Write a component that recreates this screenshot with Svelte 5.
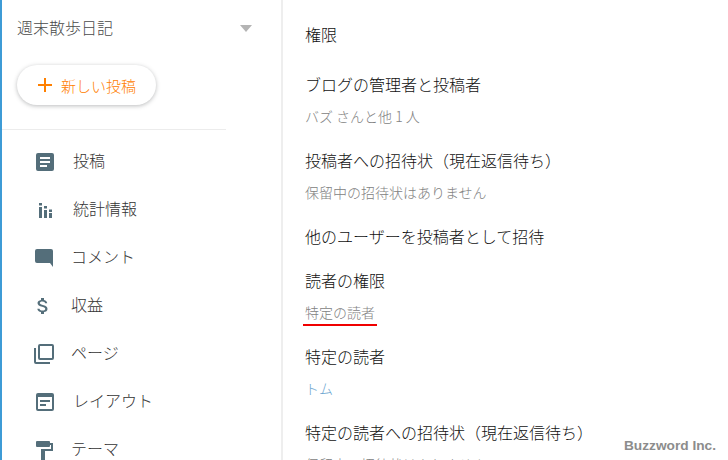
<script>
  const navItems = [
    { label: "投稿", icon: "posts", wide: true },
    { label: "統計情報", icon: "stats", wide: true },
    { label: "コメント", icon: "comments" },
    { label: "収益", icon: "earnings" },
    { label: "ページ", icon: "pages" },
    { label: "レイアウト", icon: "layout", wide: true },
    { label: "テーマ", icon: "theme" }
  ];
</script>

<div class="app">
  <aside class="sidebar">
    <div class="blog-select">
      <span>週末散歩日記</span>
      <i class="caret"></i>
    </div>
    <button class="new-post">
      <svg width="16" height="16" viewBox="0 0 16 16"><path d="M7 1h2v6h6v2H9v6H7V9H1V7h6z" fill="#ff8000" /></svg>
      <span>新しい投稿</span>
    </button>
    <hr />
    <nav>
      {#each navItems as item}
        <div class="nav-item" class:wide={item.wide}>
          <svg class="icon" width="24" height="24" viewBox="0 0 24 24">
            {#if item.icon === "posts"}
              <path d="M19 3H5a2 2 0 0 0-2 2v14a2 2 0 0 0 2 2h14a2 2 0 0 0 2-2V5a2 2 0 0 0-2-2zm-5 14H7v-2h7v2zm3-4H7v-2h10v2zm0-4H7V7h10v2z" />
            {:else if item.icon === "stats"}
              <path d="M6 9h3v11H6zM6 5h3v2.500H6zM11 12h3v8h-3zM11 8h3v2.500h-3zM16 15h3v5h-3zM16 11.500h3V14h-3z" />
            {:else if item.icon === "comments"}
              <path d="M21 5a2 2 0 0 0-2-2H5a2 2 0 0 0-2 2v10a2 2 0 0 0 2 2h13l3 4z" />
            {:else if item.icon === "earnings"}
              <path transform="translate(-1 1.300) scale(1 .89)" d="M11.800 10.900c-2.270-.59-3-1.200-3-2.150 0-1.090 1.010-1.850 2.700-1.850 1.780 0 2.440.85 2.500 2.100h2.210c-.07-1.720-1.120-3.300-3.210-3.810V3h-3v2.160c-1.940.42-3.500 1.680-3.500 3.610 0 2.310 1.910 3.460 4.700 4.130 2.500.6 3 1.480 3 2.410 0 .69-.49 1.790-2.700 1.790-2.060 0-2.870-.92-2.980-2.100h-2.200c.12 2.190 1.760 3.420 3.680 3.830V21h3v-2.150c1.950-.37 3.500-1.500 3.500-3.550 0-2.840-2.430-3.810-4.700-4.400z" />
            {:else if item.icon === "pages"}
              <path d="M4 6H2v14a2 2 0 0 0 2 2h14v-2H4V6zm16-4H8a2 2 0 0 0-2 2v12a2 2 0 0 0 2 2h12a2 2 0 0 0 2-2V4a2 2 0 0 0-2-2zm0 14H8V4h12v12z" />
            {:else if item.icon === "layout"}
              <path d="M19 3H5a2 2 0 0 0-2 2v14a2 2 0 0 0 2 2h14a2 2 0 0 0 2-2V5a2 2 0 0 0-2-2zm0 16H5V7h14v12zm-2-7H7v-2h10v2zm-4 4H7v-2h6v2z" />
            {:else}
              <path transform="translate(0 1)" d="M18 4V3a1 1 0 0 0-1-1H5a1 1 0 0 0-1 1v4a1 1 0 0 0 1 1h12a1 1 0 0 0 1-1V6h1v4H9v11a1 1 0 0 0 1 1h2a1 1 0 0 0 1-1v-9h8V4h-3z" />
            {/if}
          </svg>
          <span>{item.label}</span>
        </div>
      {/each}
    </nav>
  </aside>

  <main class="content">
    <h2>権限</h2>
    <section>
      <h3>ブログの管理者と投稿者</h3>
      <p>バズ さんと他 1 人</p>
    </section>
    <section>
      <h3>投稿者への招待状（現在返信待ち）</h3>
      <p>保留中の招待状はありません</p>
    </section>
    <section>
      <h3>他のユーザーを投稿者として招待</h3>
    </section>
    <section>
      <h3>読者の権限</h3>
      <p class="marked">特定の読者</p>
    </section>
    <section>
      <h3>特定の読者</h3>
      <p class="link">トム</p>
    </section>
    <section>
      <h3>特定の読者への招待状（現在返信待ち）</h3>
      <p>保留中の招待状はありません</p>
    </section>
  </main>

  <div class="watermark">Buzzword Inc.</div>
</div>

<style>
  :global(body) {
    margin: 0;
    background: #fff;
  }
  .app {
    position: relative;
    display: flex;
    width: 728px;
    height: 460px;
    overflow: hidden;
    font-family: "Noto Sans CJK JP", "Liberation Sans", sans-serif;
    font-weight: 300;
  }
  .sidebar {
    flex: none;
    box-sizing: border-box;
    width: 283px;
    height: 100%;
    border-left: 2px solid #3d9bd6;
    border-right: 2px solid #eeeeee;
  }
  .blog-select {
    display: flex;
    justify-content: space-between;
    align-items: center;
    height: 24px;
    margin-top: 15px;
    padding: 0 29px 0 15px;
    font-size: 16px;
    color: #4a4a4a;
  }
  .caret {
    width: 0;
    height: 0;
    margin-top: 2px;
    border-left: 6px solid transparent;
    border-right: 6px solid transparent;
    border-top: 7px solid #b4b4b4;
  }
  .new-post {
    display: flex;
    align-items: center;
    gap: 8px;
    box-sizing: border-box;
    width: 139px;
    height: 40px;
    margin: 26px 0 0 15px;
    padding: 0 0 0 20px;
    border: 0;
    border-radius: 20px;
    background: #fff;
    box-shadow: 0 1px 4px rgba(60, 64, 67, 0.35);
    font: inherit;
    font-size: 15px;
    color: #ff8000;
  }
  hr {
    width: 224px;
    height: 1px;
    margin: 24px 0 0;
    border: 0;
    background: #ececec;
  }
  nav {
    padding-top: 6px;
  }
  .nav-item {
    display: flex;
    align-items: center;
    height: 48px;
    padding-left: 30px;
    font-size: 16px;
    color: #333;
  }
  .icon {
    flex: none;
    margin: 4px 15px 0 0;
    fill: #546e7a;
  }
  .wide .icon {
    margin: 4px 16px 0 1px;
  }
  .content {
    flex: 1;
    padding: 22px 0 0 22px;
    color: #111;
  }
  h2,
  h3 {
    margin: 0;
    font-size: 16px;
    font-weight: 300;
    line-height: 24px;
  }
  section {
    margin-top: 20px;
  }
  h2 + section {
    margin-top: 26px;
  }
  p {
    margin: 8px 0 0;
    font-size: 14px;
    line-height: 24px;
    color: #828282;
  }
  .link {
    color: #6ca5d0;
  }
  .marked {
    position: relative;
  }
  .marked::after {
    content: "";
    position: absolute;
    left: -2px;
    top: 24px;
    width: 74px;
    height: 2px;
    background: #f00000;
  }
  .watermark {
    position: absolute;
    right: 12px;
    bottom: 7px;
    font-family: "Liberation Sans", sans-serif;
    font-size: 13.7px;
    font-weight: 700;
    color: #8c8c8c;
    background: rgba(255, 255, 255, 0.7);
  }
</style>
